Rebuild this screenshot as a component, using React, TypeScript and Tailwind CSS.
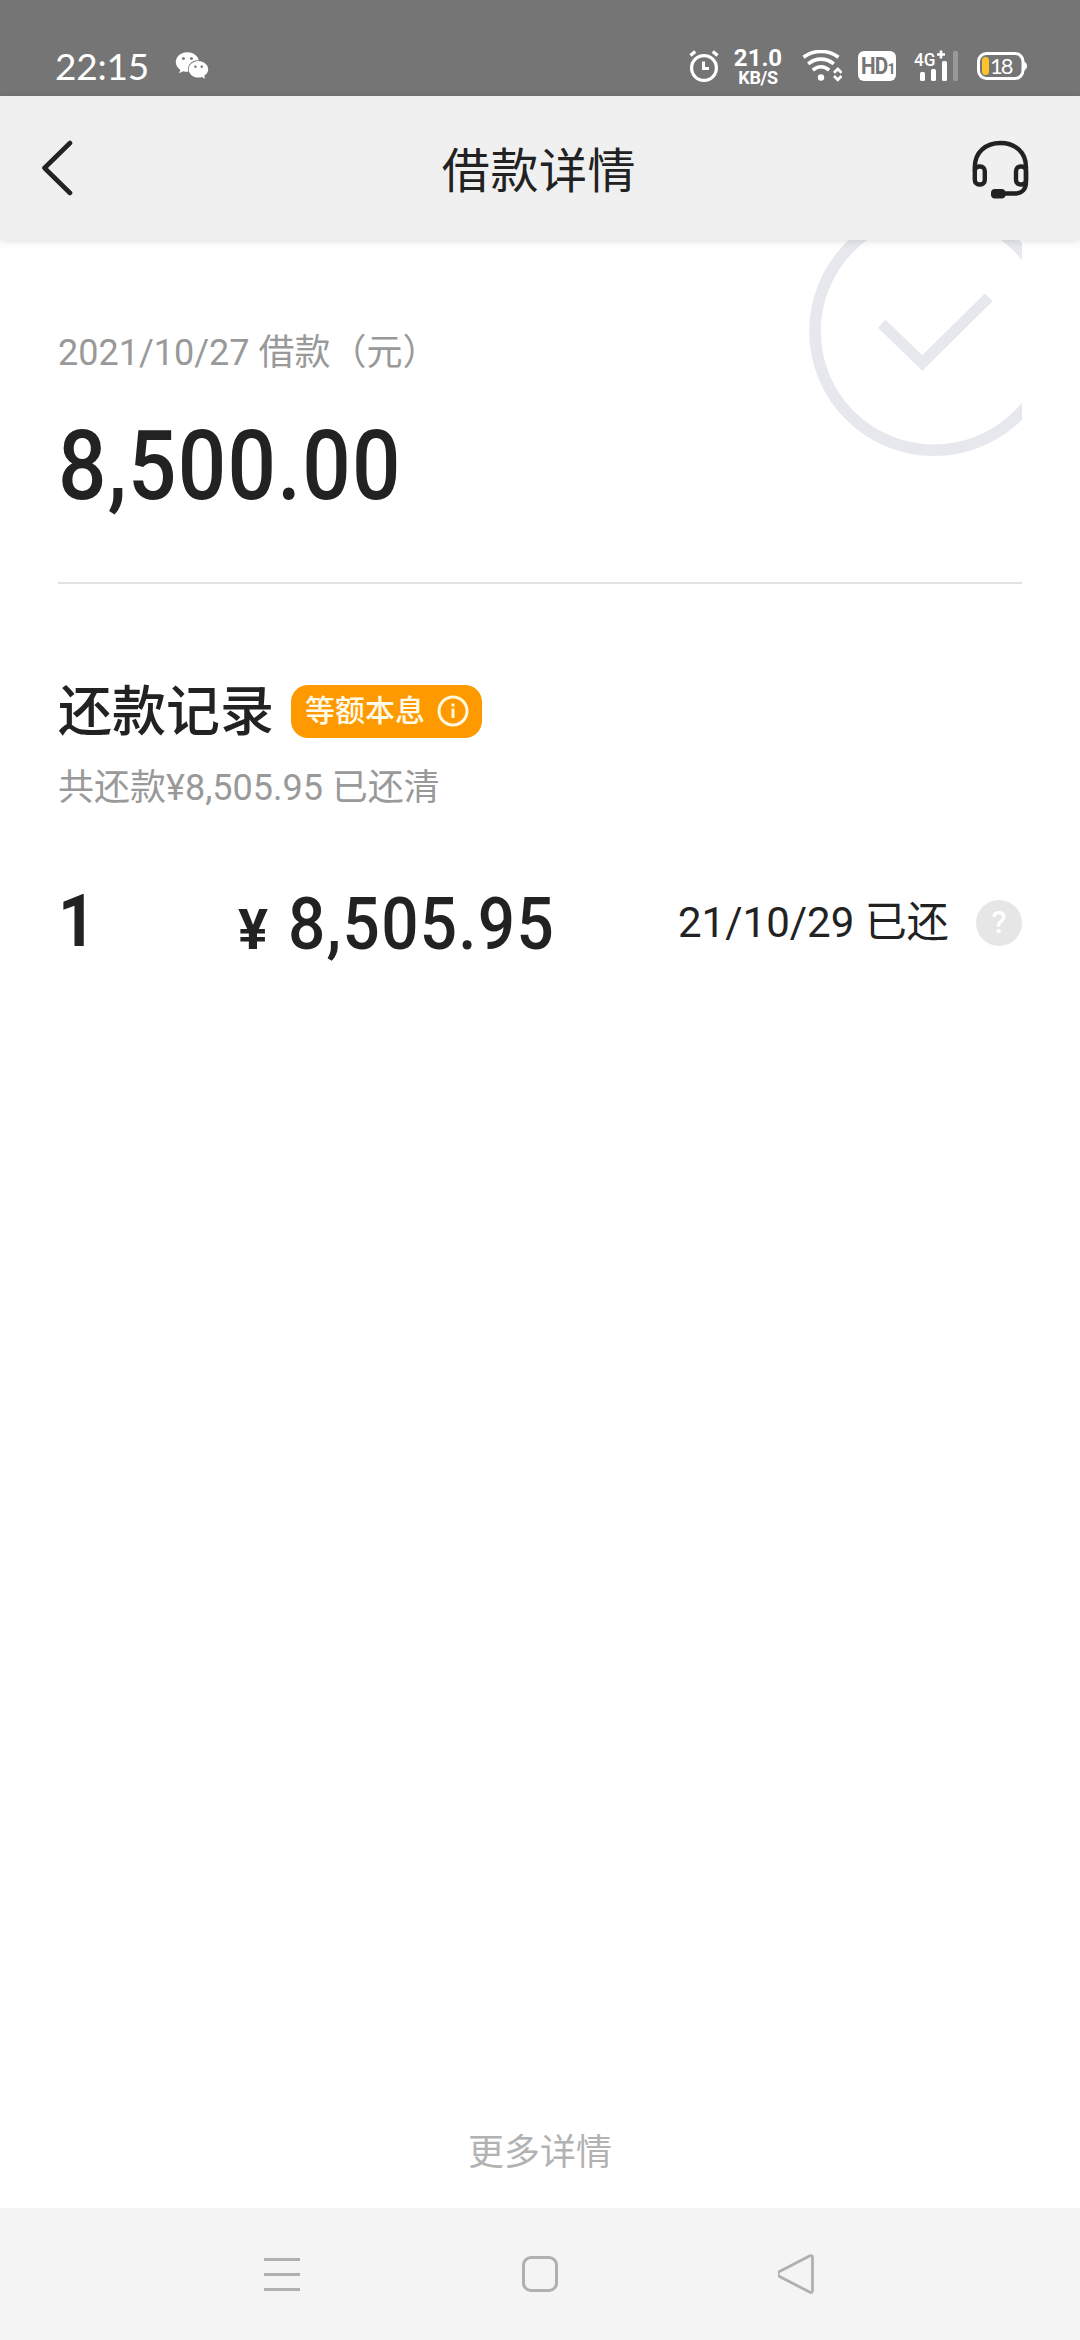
import React from "react";
import { FaWeixin } from "react-icons/fa6";

const loan = {
  title: "借款详情",
  label: "2021/10/27 借款（元）",
  amount: "8,500.00",
  recordTitle: "还款记录",
  method: "等额本息",
  summary: "共还款¥8,505.95 已还清",
  more: "更多详情",
};

const records = [{ index: 1, amount: "8,505.95", status: "21/10/29 已还" }];

const AlarmIcon = () => (
  <svg className="w-[30px] h-8" viewBox="0 0 30 32" fill="none" stroke="#fff">
    <circle cx="15" cy="18" r="12.4" strokeWidth="3.2" />
    <path d="M1.5 5.5L6.2 1.5M28.5 5.5L23.8 1.5" strokeWidth="3.4" />
    <path d="M14.5 11.5V18.6H20" strokeWidth="3" />
  </svg>
);

const WifiIcon = () => (
  <svg className="w-10 h-8" viewBox="0 0 40 32" fill="none" stroke="#fff">
    <path d="M1.5 7.2C12 -0.5 26 -0.5 36.5 7.2" strokeWidth="3.6" />
    <path d="M6.2 13.8C14 7.6 24 7.6 31.8 13.8" strokeWidth="3.6" />
    <path d="M10.8 20.2C16 15.6 22 15.6 27.2 20.2" strokeWidth="3.6" />
    <circle cx="19" cy="27.5" r="3.2" fill="#fff" stroke="none" />
    <path d="M32 22.8L35.8 19L39.6 22.8M32 26L35.8 29.8L39.6 26" strokeWidth="2.8" />
  </svg>
);

const SignalIcon = () => (
  <svg className="w-[45px] h-8 overflow-visible" viewBox="0 0 45 32">
    <text x="0" y="15.5" fill="#fff" fontSize="19" fontWeight="500" textLength="21.5" lengthAdjust="spacingAndGlyphs">
      4G
    </text>
    <path d="M23 4.5H31M27 0.5V8.5" stroke="#fff" strokeWidth="2.6" />
    <rect x="6" y="22" width="5" height="9" rx="1.5" fill="#fff" />
    <rect x="17" y="19" width="5" height="12" rx="1.5" fill="#fff" />
    <rect x="28" y="11" width="5" height="20" rx="1.5" fill="#fff" />
    <rect x="39" y="1" width="5" height="30" rx="1.5" fill="#999" />
  </svg>
);

const BatteryIcon = () => (
  <svg className="w-[50px] h-7" viewBox="0 0 50 28">
    <rect x="1.5" y="1.5" width="44.5" height="25" rx="8" fill="none" stroke="#fff" strokeWidth="3" />
    <path d="M46.5 9C49 10.5 50 12 50 14C50 16 49 17.5 46.5 19Z" fill="#fff" />
    <rect x="5" y="5" width="7" height="18" rx="3.5" fill="#fbc42d" />
    <text x="13" y="21.5" fill="#fff" fontSize="22" fontFamily="Lato" textLength="23.5">
      18
    </text>
  </svg>
);

const StatusBar = () => (
  <div className="h-24 bg-[#757575] text-white flex items-start pt-[50px]">
    <div className="w-[120px] ml-[55px] font-['Lato',sans-serif] text-[37px] leading-[32px] tracking-[-0.2px]">
      22:15
    </div>
    <FaWeixin className="w-[34px] h-[31px]" />
    <div className="ml-[480px]">
      <AlarmIcon />
    </div>
    <div className="ml-[14px] w-[50px] -mt-1 font-bold text-center">
      <div className="text-2xl leading-6">21.0</div>
      <div className="text-lg leading-[15px] tracking-[-0.3px]">KB/S</div>
    </div>
    <div className="ml-[19px]">
      <WifiIcon />
    </div>
    <div className="ml-4 mt-px w-[38px] h-[30px] rounded-md bg-white text-[#757575] font-bold flex items-baseline justify-center">
      <span className="origin-right scale-x-90 text-[23px] leading-[31px] tracking-[-1px]">
        HD
      </span>
      <span className="text-[14px]">1</span>
    </div>
    <div className="ml-[18px]">
      <SignalIcon />
    </div>
    <div className="ml-[18px] mt-[2px]">
      <BatteryIcon />
    </div>
  </div>
);

const Header = () => (
  <div className="relative z-10 h-36 bg-[#f0f0f0] text-[#222] shadow-[0_1px_8px_rgba(0,0,0,0.13)] flex items-center justify-between pl-[41px] pr-[51px]">
    <svg className="w-[66px] h-14" viewBox="0 0 66 56" fill="none" stroke="#222" strokeWidth="4.6" strokeLinecap="round" strokeLinejoin="round">
      <path d="M29 3L3.5 28L29 53" />
    </svg>
    <div className="text-5xl leading-[56px] tracking-[0.6px] pt-[7px]">
      {loan.title}
    </div>
    <svg className="mt-px w-[58px] h-[60px]" viewBox="0 0 58 60" fill="none" stroke="#222" strokeWidth="4.4">
      <path d="M3.8 32V28C3.8 13 15 4 29.5 4S55 13 55 28V43C55 50 51 54.5 44.5 54.5H33" />
      <rect x="3.8" y="27.5" width="10" height="18" rx="4.5" />
      <rect x="45" y="27.5" width="10" height="18" rx="4.5" />
      <rect x="20" y="50" width="14.5" height="9.5" rx="4" fill="#222" stroke="none" />
    </svg>
  </div>
);

// Faded "settled" stamp behind the amount
const Stamp = () => (
  <svg className="absolute right-[58px] top-0 w-[214px] h-[220px]" viewBox="0 0 214 220" fill="none" stroke="#e6e8ee">
    <circle cx="126" cy="91.3" r="119" strokeWidth="11.6" />
    <path d="M73.7 83.7L114.3 123L180.7 57.3" strokeWidth="11" />
  </svg>
);

const RecordRow = ({ record }: { record: (typeof records)[0] }) => (
  <div className="flex items-center h-[72px]">
    <div className="w-[180px] text-[73px] leading-[72px] font-bold">
      <div className="origin-left scale-x-90 -mt-1">{record.index}</div>
    </div>
    <div className="w-[440px] pt-2 flex items-baseline font-medium">
      <span className="text-[56px] leading-[72px] font-bold w-[50px]">¥</span>
      <span className="origin-left scale-x-90 text-[73px] leading-[72px] tracking-[1.4px]">
        {record.amount}
      </span>
    </div>
    <div className="grow text-[42px] leading-[56px]">{record.status}</div>
    <div className="w-[46px] h-[46px] rounded-full bg-[#e6e6e6] text-white text-[31px] font-medium flex items-center justify-center">
      ?
    </div>
  </div>
);

const Detail = () => (
  <div className="relative grow px-[58px] text-[#222] flex flex-col">
    <Stamp />
    <div className="pt-[87px] text-4xl leading-[52px] text-[#999]">
      {loan.label}
    </div>
    <div className="mt-[37px] h-[100px] text-[97px] leading-[100px] font-medium tracking-[1.4px] origin-left scale-x-88">
      {loan.amount}
    </div>
    <div className="mt-[66px] border-b-2 border-[#e2e2e2]" />
    <div className="mt-[92px] flex items-center h-[70px]">
      <div className="text-[54px] leading-[70px] font-medium pt-[4px]">
        {loan.recordTitle}
      </div>
      <div className="ml-[17px] w-[191px] h-[53px] rounded-[17px] bg-[#ff9900] text-[#fffbea] flex items-center pl-[14px]">
        <span className="text-[30px] leading-[40px] font-medium">
          {loan.method}
        </span>
        <svg className="ml-3 w-8 h-8" viewBox="0 0 32 32" fill="none" stroke="#fff8dc" strokeWidth="3">
          <circle cx="16" cy="16" r="14" />
          <path d="M16 13.5V23M16 8.5V11.5" />
        </svg>
      </div>
    </div>
    <div className="mt-4 text-4xl leading-[52px] text-[#999]">
      {loan.summary}
    </div>
    <div className="mt-[73px]">
      {records.map((r) => (
        <RecordRow key={r.index} record={r} />
      ))}
    </div>
    <div className="mt-auto pb-[29px] text-center text-4xl leading-[52px] text-[#b2b2b2]">
      {loan.more}
    </div>
  </div>
);

const NavBar = () => (
  <div className="h-[132px] bg-[#f4f4f4] flex items-center justify-between px-[262px]">
    <svg className="w-10 h-11" viewBox="0 0 40 44" stroke="#b0b0b0" strokeWidth="3">
      <path d="M2 7.5H38M2 22.5H38M2 37.5H38" />
    </svg>
    <div className="w-9 h-9 rounded-[9px] border-[3px] border-[#b0b0b0]" />
    <svg className="w-10 h-11" viewBox="0 0 40 44" fill="none" stroke="#b0b0b0" strokeWidth="2.8" strokeLinejoin="round">
      <path d="M31.5 4Q34.5 2.5 34.5 6V38Q34.5 41.5 31.5 40L1.5 24.5Q-2 22 1.5 19.5Z" />
    </svg>
  </div>
);

const App = () => {
  return (
    <div className="w-[1080px] h-[2340px] bg-white overflow-hidden flex flex-col font-['Roboto','Noto_Sans_CJK_SC',sans-serif]">
      <StatusBar />
      <Header />
      <Detail />
      <NavBar />
    </div>
  );
};

export default App;
